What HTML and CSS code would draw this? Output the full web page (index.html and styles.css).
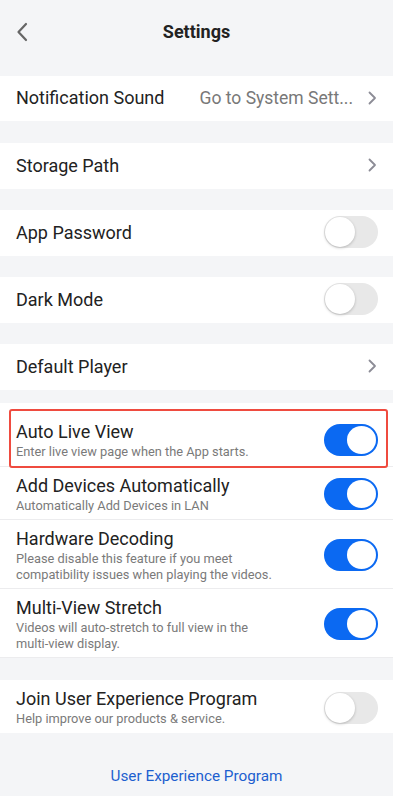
FILE: index.html
```html
<!DOCTYPE html>
<html lang="en">
<head>
<meta charset="utf-8">
<title>Settings</title>
<link rel="stylesheet" href="styles.css">
</head>
<body>
<div class="page">
  <header class="header">
    <svg class="back" width="12" height="20" viewBox="0 0 12 20"><path d="M10 2 L2.5 10 L10 18" fill="none" stroke="#666" stroke-width="2.2" stroke-linecap="round" stroke-linejoin="round"/></svg>
    <h1 class="title">Settings</h1>
  </header>

  <div class="list">
    <div class="card row">
      <span class="label">Notification Sound</span>
      <span class="right"><span class="value">Go to System Sett...</span><svg class="chev" width="9" height="14" viewBox="0 0 9 14"><path d="M1.5 1.5 L7 7 L1.5 12.5" fill="none" stroke="#8c8c96" stroke-width="1.8" stroke-linecap="round" stroke-linejoin="round"/></svg></span>
    </div>
    <div class="card row">
      <span class="label">Storage Path</span>
      <svg class="chev" width="9" height="14" viewBox="0 0 9 14"><path d="M1.5 1.5 L7 7 L1.5 12.5" fill="none" stroke="#8c8c96" stroke-width="1.8" stroke-linecap="round" stroke-linejoin="round"/></svg>
    </div>
    <div class="card row">
      <span class="label">App Password</span>
      <span class="toggle"><span class="thumb"></span></span>
    </div>
    <div class="card row">
      <span class="label">Dark Mode</span>
      <span class="toggle"><span class="thumb"></span></span>
    </div>
    <div class="card row">
      <span class="label">Default Player</span>
      <svg class="chev" width="9" height="14" viewBox="0 0 9 14"><path d="M1.5 1.5 L7 7 L1.5 12.5" fill="none" stroke="#8c8c96" stroke-width="1.8" stroke-linecap="round" stroke-linejoin="round"/></svg>
    </div>

    <div class="card group">
      <div class="item highlight">
        <div class="text">
          <div class="label">Auto Live View</div>
          <div class="sub">Enter live view page when the App starts.</div>
        </div>
        <span class="toggle on"><span class="thumb"></span></span>
        <span class="mark"></span>
      </div>
      <div class="item">
        <div class="text">
          <div class="label">Add Devices Automatically</div>
          <div class="sub">Automatically Add Devices in LAN</div>
        </div>
        <span class="toggle on"><span class="thumb"></span></span>
      </div>
      <div class="item">
        <div class="text">
          <div class="label">Hardware Decoding</div>
          <div class="sub">Please disable this feature if you meet<br>compatibility issues when playing the videos.</div>
        </div>
        <span class="toggle on"><span class="thumb"></span></span>
      </div>
      <div class="item">
        <div class="text">
          <div class="label">Multi-View Stretch</div>
          <div class="sub">Videos will auto-stretch to full view in the<br>multi-view display.</div>
        </div>
        <span class="toggle on"><span class="thumb"></span></span>
      </div>
    </div>

    <div class="card join">
      <div class="text">
        <div class="label">Join User Experience Program</div>
        <div class="sub">Help improve our products &amp; service.</div>
      </div>
      <span class="toggle"><span class="thumb"></span></span>
    </div>
  </div>

  <a class="link" href="#">User Experience Program</a>
</div>
</body>
</html>
```

FILE: styles.css
```css
* { box-sizing: border-box; }
html, body {
  margin: 0;
  padding: 0;
  background: #f4f5f7;
}
body {
  font-family: Roboto, "Noto Sans", "Liberation Sans", sans-serif;
  color: #222;
  width: 393px;
  height: 796px;
  overflow: hidden;
}
.page {
  display: flex;
  flex-direction: column;
}
.header {
  position: relative;
  height: 76px;
  display: flex;
  align-items: flex-start;
  justify-content: center;
  padding-top: 21px;
}
.back {
  position: absolute;
  left: 16px;
  top: 22px;
}
.title {
  margin: 0;
  font-size: 18px;
  font-weight: 700;
  line-height: 22px;
  color: #222;
}
.list {
  display: flex;
  flex-direction: column;
}
.card {
  background: #fff;
}
.row {
  height: 46px;
  margin-bottom: 21px;
  display: flex;
  align-items: center;
  justify-content: space-between;
  padding: 0 15px 2px 16px;
}
.row:first-child { height: 45px; margin-bottom: 22px; }
.row:nth-child(5) { margin-bottom: 13px; }
.label {
  font-size: 18px;
  line-height: 21px;
  color: #222;
}
.text .label {
  margin-bottom: 2px;
}
.right {
  display: flex;
  align-items: center;
}
.value {
  font-size: 17.5px;
  color: #787878;
  margin-right: 15px;
}
.chev {
  display: block;
  margin-right: 1px;
}
.toggle {
  flex: none;
  position: relative;
  width: 54px;
  height: 32px;
  border-radius: 16px;
  background: #e8e8e8;
}
.toggle .thumb {
  position: absolute;
  left: 1px;
  top: 1px;
  width: 30px;
  height: 30px;
  border-radius: 50%;
  background: #fff;
  box-shadow: 0 1px 3px rgba(0,0,0,0.22);
}
.toggle.on {
  background: #0b69f2;
}
.toggle.on .thumb {
  left: 23px;
  top: 2px;
  width: 29px;
  height: 28px;
  box-shadow: none;
}
.group {
  padding-top: 9px;
  margin-bottom: 22px;
}
.item {
  position: relative;
  display: flex;
  align-items: center;
  justify-content: space-between;
  padding: 8px 15px 6px 16px;
  border-bottom: 1px solid #ececee;
}
.item.highlight {
  padding-top: 9px;
}
.sub {
  font-size: 12.8px;
  line-height: 15.5px;
  color: #7a7a7a;
}
.mark {
  position: absolute;
  left: 9px;
  right: 5px;
  top: -3px;
  bottom: -2px;
  border: 2px solid #ef4b3f;
  border-radius: 3px;
}
.join {
  display: flex;
  align-items: center;
  justify-content: space-between;
  padding: 8px 15px 6px 16px;
  height: 53px;
}
.link {
  margin-top: 33px;
  align-self: center;
  font-size: 15.3px;
  line-height: 20px;
  color: #1d5fcf;
  text-decoration: none;
}
```
